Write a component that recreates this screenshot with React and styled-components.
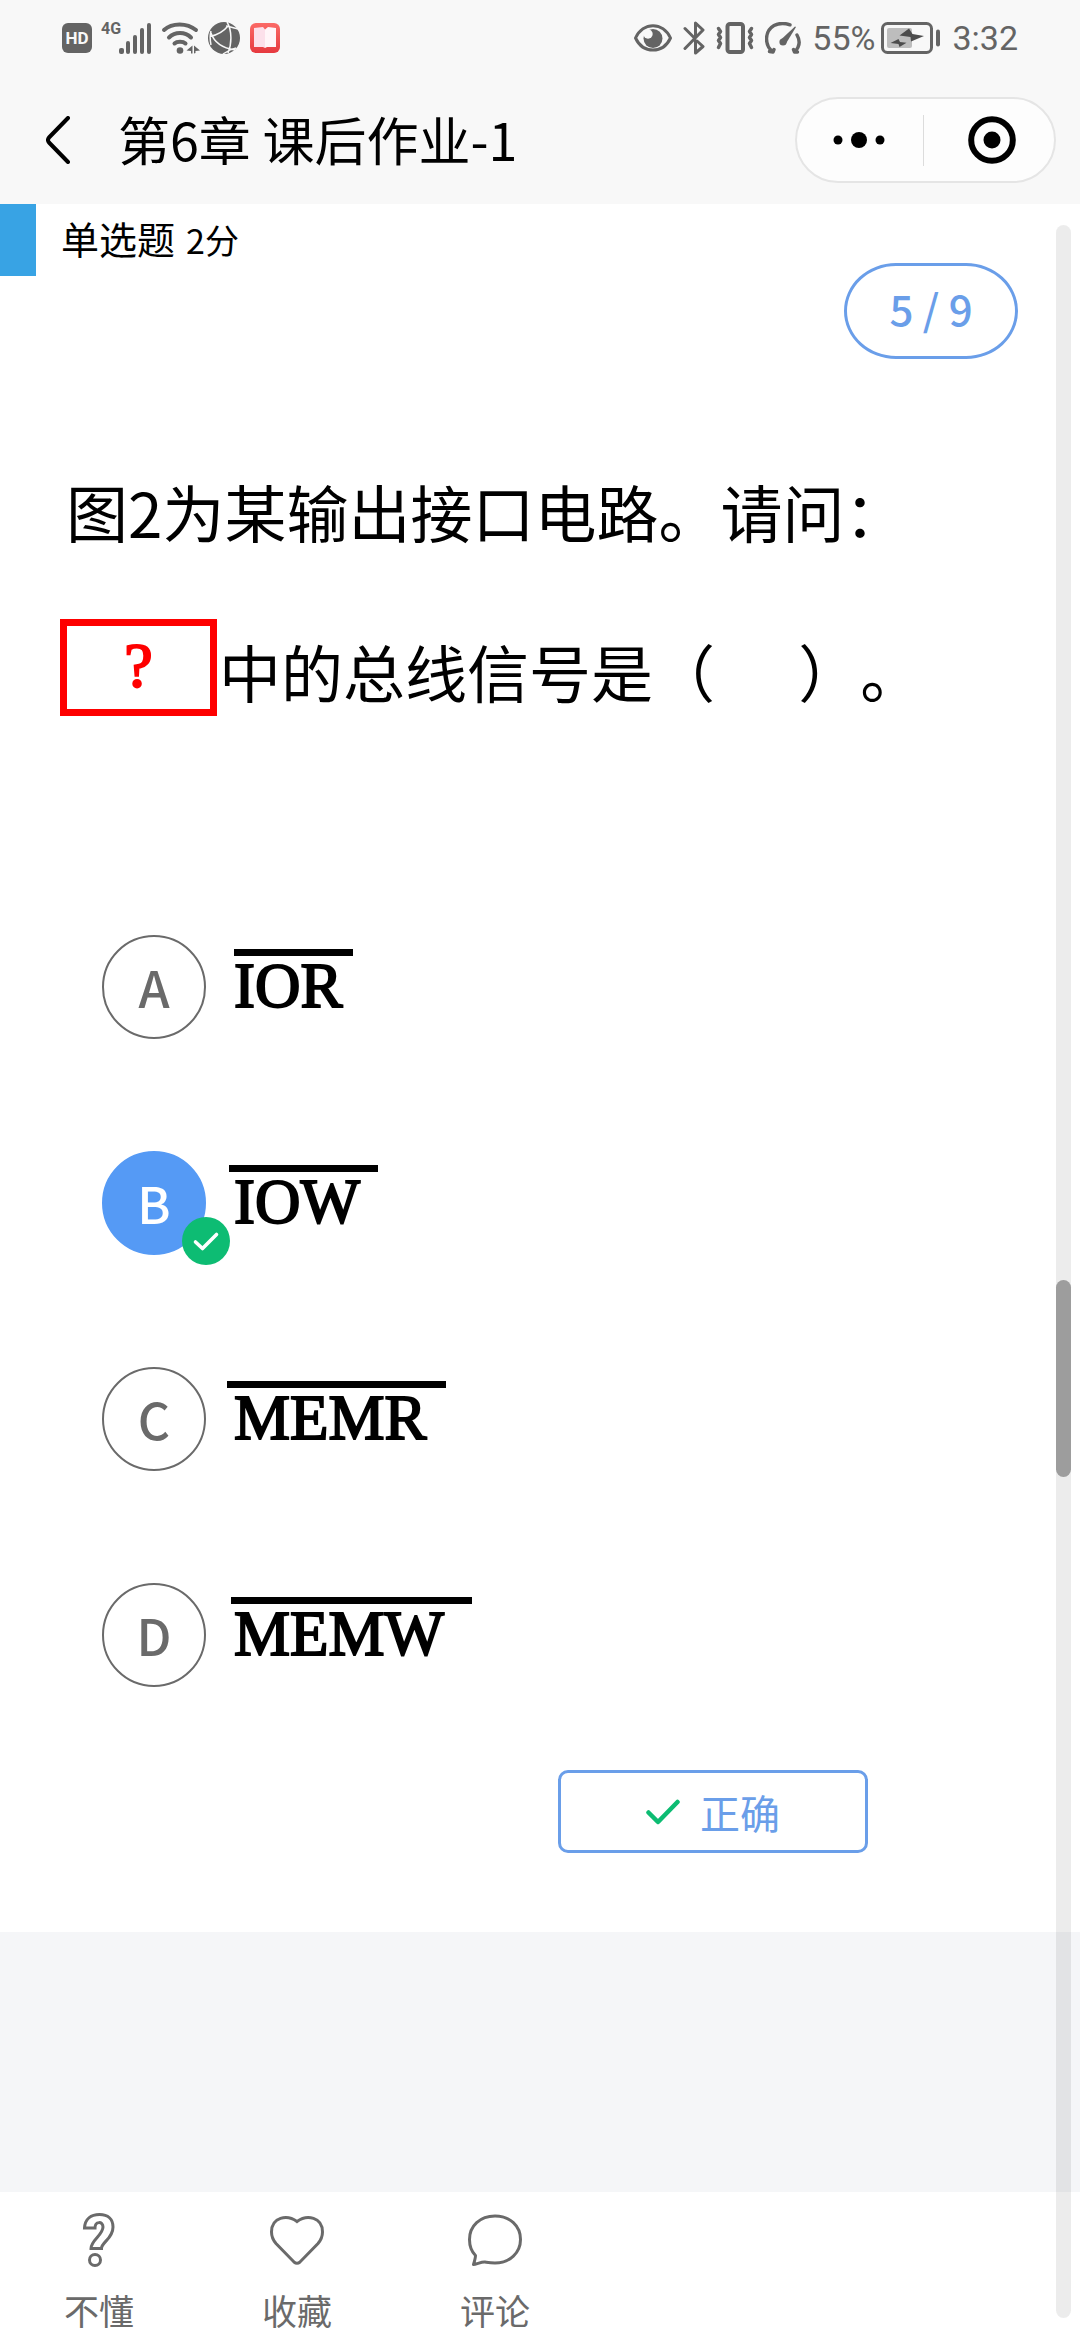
import React, { useState } from "react";
import styled, { createGlobalStyle } from "styled-components";

const INK = "#646464";
const BLUE = "#6a9ee9";
const GREEN = "#0dbc73";

const GlobalStyle = createGlobalStyle`
  *, *::before, *::after { box-sizing: border-box; }
  body { margin: 0; background: #fff; }
  body, button, input {
    font-family: "Noto Sans CJK SC", "Noto Sans", sans-serif;
  }
  button { padding: 0; border: 0; background: none; color: inherit; cursor: pointer; }
  svg { display: block; flex: none; }
  p, h1 { margin: 0; font-weight: 400; }
`;

const Page = styled.div`
  position: relative;
  display: flex;
  flex-direction: column;
  min-height: 100vh;
  background: #f5f6f8;
  color: #000;
`;

const Header = styled.header`
  background: #f8f8f8;
`;

const StatusBar = styled.div`
  display: flex;
  align-items: center;
  justify-content: space-between;
  height: 76px;
  padding: 0 62px;
  color: ${INK};
  font-family: Roboto, sans-serif;
  font-size: 34px;
  line-height: 40px;
`;

const StatusGroup = styled.div`
  display: flex;
  align-items: center;
  gap: ${(p) => p.$gap}px;
`;

const HdBadge = styled.span`
  width: 30px;
  height: 30px;
  border-radius: 6px;
  background: ${INK};
  color: #f8f8f8;
  font-size: 17px;
  font-weight: 700;
  line-height: 31px;
  text-align: center;
`;

const Signal = styled.span`
  display: flex;
  align-items: flex-start;
  width: 52px;
  padding-left: 1px;
  font-size: 16px;
  font-weight: 700;
  line-height: 12px;
  svg { margin-left: -2px; }
`;

const NavBar = styled.div`
  display: flex;
  align-items: center;
  height: 128px;
  padding: 0 24px 0 46px;
`;

const BackButton = styled.button`
  width: 72px;
`;

const Title = styled.h1`
  flex: 1;
  padding-bottom: 2px;
  font-size: 52px;
  line-height: 64px;
`;

const Capsule = styled.div`
  display: flex;
  align-items: center;
  width: 261px;
  height: 86px;
  border: 2px solid #e5e5e5;
  border-radius: 43px;
  background: #fdfdfd;
`;

const CapsuleButton = styled.button`
  display: flex;
  flex: 1;
  align-items: center;
  justify-content: center;
`;

const CapsuleDivider = styled.span`
  width: 1px;
  height: 51px;
  margin-right: 6px;
  margin-left: 2px;
  background: #dcdcdc;
`;

const Card = styled.main`
  padding-bottom: 79px;
  background: #fff;
`;

const TopRow = styled.div`
  display: flex;
  align-items: flex-start;
  justify-content: space-between;
  padding-right: 62px;
`;

const TypeTag = styled.div`
  display: flex;
  align-items: baseline;
  gap: 11px;
  height: 72px;
  padding-left: 25px;
  border-left: 36px solid #38a3e4;
  font-size: 38px;
  line-height: 68px;
  small { font-size: 34px; }
`;

const Progress = styled.div`
  width: 174px;
  height: 96px;
  margin-top: 59px;
  border: 3px solid ${BLUE};
  border-radius: 52px / 48px;
  color: ${BLUE};
  font-size: 42px;
  font-weight: 500;
  line-height: 84px;
  text-align: center;
`;

const Question = styled.section`
  padding: 72px 60px 0;
  font-size: 62px;
  line-height: 160px;
  text-spacing-trim: space-all;
`;

const QuestionLine = styled.p`
  display: flex;
  align-items: flex-start;
  padding-left: ${(p) => p.$indent || 0}px;
`;

const Blank = styled.span`
  width: 157px;
  height: 97px;
  margin: 28px 2px 0 0;
  border: 7px solid #fe0000;
  color: #fe0000;
  font-family: "Liberation Serif", serif;
  font-size: 64px;
  -webkit-text-stroke: 2px #fe0000;
  line-height: 80px;
  text-align: center;
`;

const Options = styled.fieldset`
  display: flex;
  flex-direction: column;
  gap: 112px;
  margin: 0;
  padding: 184px 0 0 102px;
  border: 0;
`;

const Option = styled.label`
  display: flex;
  align-items: flex-start;
  height: 104px;
  cursor: pointer;
`;

const Radio = styled.input`
  position: absolute;
  opacity: 0;
`;

const Letter = styled.span`
  position: relative;
  width: 104px;
  height: 104px;
  border: 2px solid ${(p) => (p.$on ? "#559af5" : "#6a6a6a")};
  border-radius: 50%;
  background: ${(p) => (p.$on ? "#559af5" : "transparent")};
  color: ${(p) => (p.$on ? "#fff" : "#6a6a6a")};
  font-size: 50px;
  font-weight: 500;
  line-height: 98px;
  text-align: center;
`;

const Badge = styled.svg`
  position: absolute;
  right: -26px;
  bottom: -12px;
`;

const Signame = styled.span`
  width: ${(p) => p.$width}px;
  margin: 14px 0 0 ${(p) => 28 - p.$lead}px;
  padding-left: ${(p) => p.$lead}px;
  border-top: 7px solid #000;
  font-family: "Liberation Serif", serif;
  font-size: 63px;
  -webkit-text-stroke: 2px #000;
  line-height: 60px;
`;

const Result = styled.button`
  && {
    display: flex;
    align-items: center;
    justify-content: center;
    gap: 20px;
    width: 310px;
    height: 83px;
    margin: 83px 212px 0 auto;
    border: 3px solid ${BLUE};
    border-radius: 10px;
    color: ${BLUE};
    font-size: 40px;
    line-height: 60px;
  }
`;

const Footer = styled.footer`
  display: flex;
  height: 148px;
  margin-top: auto;
  background: #fff;
`;

const Action = styled.button`
  display: flex;
  flex-direction: column;
  align-items: center;
  justify-content: flex-start;
  gap: 16px;
  width: 198px;
  && { padding-top: 20px; color: #6a6a6a; }
  font-size: 35px;
  line-height: 52px;
`;

const Track = styled.div`
  position: absolute;
  top: 225px;
  right: 9px;
  bottom: 22px;
  width: 15px;
  border-radius: 8px;
  background: rgba(0, 0, 0, 0.075);
`;

const Thumb = styled.div`
  position: absolute;
  top: 50.4%;
  width: 100%;
  height: 9.4%;
  border-radius: 8px;
  background: #9d9d9d;
`;

const line = { fill: "none", stroke: "currentColor", strokeLinecap: "round", strokeLinejoin: "round" };

const SignalBars = () => (
  <svg width="33" height="31" viewBox="0 0 33 31" fill="currentColor">
    <rect x="0" y="25" width="5" height="6" rx="2" />
    <rect x="7" y="18" width="4" height="13" rx="2" />
    <rect x="14" y="12" width="4" height="19" rx="2" />
    <rect x="21" y="5" width="4" height="26" rx="2" />
    <rect x="28" y="0" width="4" height="31" rx="2" />
  </svg>
);

const Wifi = () => (
  <svg width="40" height="32" viewBox="0 0 40 32" {...line} strokeWidth="4">
    <path d="M4 8C12 .5 27 .5 36 8M9 15.500C15 9.500 25 9.500 31 15.500M14.500 21.500C17 19 23 19 25.500 21.500" />
    <circle cx="20" cy="28.500" r="3.300" fill="currentColor" stroke="none" />
    <path d="M32.500 23.500v8h-1.500v-2.500l-4.500-.5zM34 23.500v8l1.500-.5v-2l4.500-.5z" fill="currentColor" stroke="none" />
  </svg>
);

const Globe = () => (
  <svg width="32" height="32" viewBox="0 0 32 32" fill="none" stroke="#f8f8f8" strokeWidth="1.500">
    <circle cx="16" cy="16" r="16" fill={INK} stroke="none" />
    <path d="M2 14.500C9 13 16 9 20 4M3 11C6 20 14 26 27 28M19 0C24 8 24 22 20 31M3 9C1.500 14 2 18 3 23M18 4C23 5 26 6 30 7M15 32C19 29 23 27 28 26" />
  </svg>
);

const BookApp = () => (
  <svg width="32" height="30" viewBox="0 0 32 30">
    <defs>
      <linearGradient id="book" x1="0" y1="0" x2="0" y2="1">
        <stop offset="0" stopColor="#fb6a66" />
        <stop offset="1" stopColor="#e6393f" />
      </linearGradient>
    </defs>
    <rect x="2" width="30" height="30" rx="6" fill="url(#book)" />
    <path d="M6 5l9-1 2 2.500V25l-2-1H6z" fill="#fce0ea" />
    <path d="M28 5l-8-1-3 2.500V25l2-1h9z" fill="#fff5f8" />
  </svg>
);

const Eye = () => (
  <svg width="38" height="28" viewBox="0 0 38 28">
    <path d="M1.500 14C9-2.500 29-2.500 36.500 14C29 30 9 30 1.500 14Z" fill="none" stroke={INK} strokeWidth="3" />
    <circle cx="19" cy="14.500" r="9.500" fill={INK} />
    <circle cx="14" cy="10" r="4.700" fill="#f8f8f8" />
  </svg>
);

const Bluetooth = () => (
  <svg width="22" height="34" viewBox="0 0 22 34" {...line} strokeWidth="3">
    <path d="M2 7.500L12 17.500M2 27.500L20 9L12.500 2V15M14 20L20 25.500L12.500 32V20" />
  </svg>
);

const Vibrate = () => (
  <svg width="38" height="32" viewBox="0 0 38 32" {...line} strokeWidth="4">
    <rect x="11.500" y="2" width="15.500" height="28" rx="2.500" />
    <path d="M2.500 6.500l2 3-2 3 2 3-2 3 2 3-2 4M35.500 6.500l-2 3 2 3-2 3 2 3-2 3 2 4" strokeWidth="3.500" />
  </svg>
);

const Gauge = () => (
  <svg width="36" height="32" viewBox="0 0 36 32" {...line} strokeWidth="3.400">
    <path d="M8 30C-1 23-.5 9 9 3.500C14 1 20 1 25 2.800M32 13C35.500 19 34.500 25 29.500 30M4.500 29.500l3.500.5 1-2.500M32.500 30l-3 0-1-2.500" />
    <circle cx="18" cy="20" r="3.600" fill="currentColor" stroke="none" />
    <path d="M15.500 18L30 4.500L31 5L21 21.500Z" fill="currentColor" stroke="none" />
  </svg>
);

const Battery = () => (
  <svg width="60" height="32" viewBox="0 0 60 32">
    <rect x="1.500" y="1.500" width="49" height="29" rx="5" fill="none" stroke={INK} strokeWidth="3" />
    <rect x="6" y="6" width="25" height="20" rx="2" fill="#bdbdbd" />
    <path d="M28 6.500L31.500 12L43 14L30 19.500L29.500 15L18.500 13.500ZM17.500 17L19 20L25.500 20.800L18.500 25L17.500 22L9.500 21Z" fill="#4c4c4c" />
    <rect x="55" y="7.500" width="4" height="17" rx="2" fill={INK} />
  </svg>
);

const QuestionIcon = () => (
  <svg width="56" height="56" viewBox="0 0 56 56" {...line} strokeWidth="3" strokeLinejoin="miter">
    <path d="M13.500 16C14 7 20 2.500 28.500 2.500C37 2.500 42 7 42 15C42 27 30.500 30 30.500 36.500H20C20 28 32 23 32 15C32 9 24 9 24 16Z" />
    <circle cx="24" cy="48" r="5.500" />
  </svg>
);

const HeartIcon = () => (
  <svg width="56" height="56" viewBox="0 0 56 56" {...line} strokeWidth="3" strokeLinejoin="miter">
    <path d="M28 9.500C18 2 2.500 5 2.500 20C2.500 24.500 4 28 7 31.500L25 50Q28 52.500 31 50L49 31.500C52 28 53.500 24.500 53.500 20C53.500 5 38 2 28 9.500Z" />
  </svg>
);

const BubbleIcon = () => (
  <svg width="56" height="56" viewBox="0 0 56 56" {...line} strokeWidth="3">
    <path d="M6.500 52.500C9 52.500 15 49.500 18 50C21 50.500 23 51 28 51C43 51 53.500 40.500 53.500 27.500C53.500 14 43 4 28 4C13 4 2.500 14 2.500 27.500C2.500 34 5 40 8.500 43.500Q8.500 46 6.500 52.500Z" />
  </svg>
);

const OPTIONS = [
  { key: "A", name: "IOR", lead: 0, width: 119 },
  { key: "B", name: "IOW", lead: 5, width: 149 },
  { key: "C", name: "MEMR", lead: 7, width: 219 },
  { key: "D", name: "MEMW", lead: 3, width: 241 },
];

const ACTIONS = [
  { label: "不懂", Icon: QuestionIcon },
  { label: "收藏", Icon: HeartIcon },
  { label: "评论", Icon: BubbleIcon },
];

export default function App() {
  const [picked, setPicked] = useState("B");
  return (
    <Page>
      <GlobalStyle />
      <Header>
        <StatusBar>
          <StatusGroup $gap={8}>
            <HdBadge>HD</HdBadge>
            <Signal>4G<SignalBars /></Signal>
            <Wifi />
            <Globe />
            <BookApp />
          </StatusGroup>
          <StatusGroup $gap={11}>
            <Eye />
            <Bluetooth />
            <Vibrate />
            <Gauge />
            <StatusGroup $gap={6}>
              <span>55%</span>
              <Battery />
            </StatusGroup>
            <span>3:32</span>
          </StatusGroup>
        </StatusBar>
        <NavBar>
          <BackButton aria-label="返回">
            <svg width="24" height="48" viewBox="0 0 24 48" {...line} strokeWidth="4">
              <path d="M22 2L3 21.500Q1 24 3 26.500L22 46" />
            </svg>
          </BackButton>
          <Title>第6章 课后作业-1</Title>
          <Capsule>
            <CapsuleButton aria-label="更多">
              <svg width="52" height="18" viewBox="0 0 52 18">
                <circle cx="5" cy="9" r="4.500" />
                <circle cx="26" cy="9" r="8" />
                <circle cx="47" cy="9" r="4.500" />
              </svg>
            </CapsuleButton>
            <CapsuleDivider />
            <CapsuleButton aria-label="关闭">
              <svg width="48" height="48" viewBox="0 0 48 48">
                <circle cx="24" cy="24" r="20.800" fill="none" stroke="#000" strokeWidth="6" />
                <circle cx="24" cy="24" r="8.500" />
              </svg>
            </CapsuleButton>
          </Capsule>
        </NavBar>
      </Header>

      <Card>
        <TopRow>
          <TypeTag>单选题<small>2分</small></TypeTag>
          <Progress>5 / 9</Progress>
        </TopRow>
        <Question>
          <QuestionLine $indent={6}>图2为某输出接口电路。请问：</QuestionLine>
          <QuestionLine>
            <Blank>?</Blank>
            中的总线信号是（{"\u00a0".repeat(6)}）。
          </QuestionLine>
        </Question>
        <Options aria-label="选项">
          {OPTIONS.map((o) => (
            <Option key={o.key}>
              <Radio type="radio" name="answer" checked={picked === o.key} onChange={() => setPicked(o.key)} />
              <Letter $on={picked === o.key}>
                {o.key}
                {picked === o.key && (
                  <Badge width="48" height="48" viewBox="0 0 48 48">
                    <circle cx="24" cy="24" r="24" fill={GREEN} />
                    <path d="M13.500 25L20.500 31.500L34.500 17.500" fill="none" stroke="#fff" strokeWidth="3.600" strokeLinecap="round" strokeLinejoin="round" />
                  </Badge>
                )}
              </Letter>
              <Signame $lead={o.lead} $width={o.width}>{o.name}</Signame>
            </Option>
          ))}
        </Options>
        <Result type="button">
          <svg width="34" height="26" viewBox="0 0 34 26" fill="none" stroke={GREEN} strokeWidth="4.500" strokeLinecap="round" strokeLinejoin="round">
            <path d="M2.500 13.500L12 23L31.500 3" />
          </svg>
          正确
        </Result>
      </Card>

      <Footer>
        {ACTIONS.map(({ label, Icon }) => (
          <Action key={label} type="button">
            <Icon />
            {label}
          </Action>
        ))}
      </Footer>

      <Track>
        <Thumb />
      </Track>
    </Page>
  );
}
